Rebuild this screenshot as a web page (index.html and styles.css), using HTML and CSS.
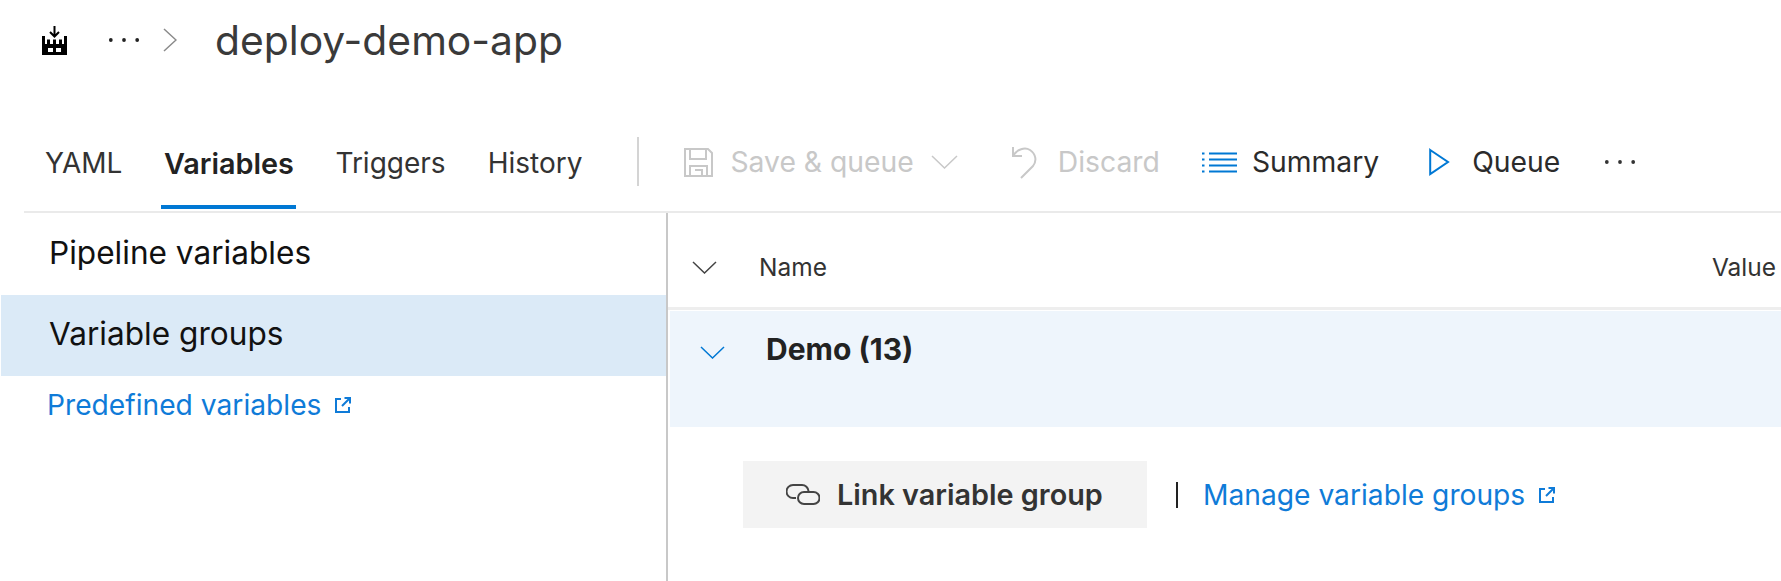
FILE: index.html
```html
<!DOCTYPE html>
<html lang="en">
<head>
<meta charset="utf-8">
<title>deploy-demo-app</title>
<link rel="stylesheet" href="styles.css">
</head>
<body>
<div class="page">
  <header class="crumbs">
    <svg class="i-factory" viewBox="0 0 25 29"><path d="M0 10H3V18H5V13.500H8V18H11V13.500H14V18H17V13.500H20V18H22V10H25V29H0ZM6 22V26H11V22ZM14 22V26H19V22Z" fill="#000" fill-rule="evenodd"/><path d="M12.500 0V10M8 6l4.500 4.500L17 6" fill="none" stroke="#000" stroke-width="2"/></svg>
    <svg class="i-dots" viewBox="0 0 34 6"><circle cx="3" cy="3" r="2" fill="#222"/><circle cx="17" cy="3" r="2" fill="#222"/><circle cx="31" cy="3" r="2" fill="#222"/></svg>
    <svg class="i-crumb" viewBox="0 0 14 24"><path d="M1 1l12 11L1 23" fill="none" stroke="#8a8a8a" stroke-width="1.500"/></svg>
    <h1 class="title">deploy-demo-app</h1>
  </header>

  <nav class="toolbar">
    <div class="tabs">
      <a class="tab tab-yaml">YAML</a>
      <a class="tab tab-active">Variables</a>
      <a class="tab tab-triggers">Triggers</a>
      <a class="tab tab-history">History</a>
    </div>
    <span class="vsep"></span>
    <div class="cmds">
      <svg class="i-save" viewBox="0 0 29 29"><path d="M1 1H24L28 5V28H1ZM6 1V11H22V1M6 28V18H23V28M11 22H18V28" fill="none" stroke="#c8c8c8" stroke-width="2"/></svg>
      <span class="cmd cmd-off cmd-save">Save &amp; queue</span>
      <svg class="i-chev-off" viewBox="0 0 27 14"><path d="M1 1l12.500 12L26 1" fill="none" stroke="#c8c8c8" stroke-width="1.500"/></svg>
      <svg class="i-undo" viewBox="0 0 26 33"><path d="M2 1V10H11M2 10C6 3 14 1 19 4C25 8 26 15 22 20L10 32" fill="none" stroke="#c8c8c8" stroke-width="2"/></svg>
      <span class="cmd cmd-off cmd-discard">Discard</span>
      <svg class="i-summary" viewBox="0 0 35 21"><path d="M7 1.500H35M7 7.500H35M7 13.500H35M7 19.500H35" stroke="#0078d4" stroke-width="2.200"/><path d="M0 1.500H2.500M0 7.500H2.500M0 13.500H2.500M0 19.500H2.500" stroke="#0078d4" stroke-width="2.200"/></svg>
      <span class="cmd cmd-summary">Summary</span>
      <svg class="i-play" viewBox="0 0 21 28"><path d="M1.200 2L19 14L1.200 26Z" fill="none" stroke="#0078d4" stroke-width="2"/></svg>
      <span class="cmd cmd-queue">Queue</span>
      <svg class="i-dots i-more" viewBox="0 0 34 6"><circle cx="3" cy="3" r="2" fill="#333"/><circle cx="17" cy="3" r="2" fill="#333"/><circle cx="31" cy="3" r="2" fill="#333"/></svg>
    </div>
  </nav>

  <main class="body">
    <aside class="side">
      <div class="side-item">Pipeline variables</div>
      <div class="side-item side-selected">Variable groups</div>
      <a class="ext-link side-link">Predefined variables<svg class="i-ext" viewBox="0 0 18 18"><path d="M7 3H2V16H15V11" fill="none" stroke="#0f7bd8" stroke-width="2"/><path d="M8 10L15.500 2.500M10.500 2H16V7.500" fill="none" stroke="#0f7bd8" stroke-width="2"/></svg></a>
    </aside>
    <section class="content">
      <div class="col-head">
        <svg class="i-chev-head" viewBox="0 0 25 13"><path d="M1 1l11.500 11L24 1" fill="none" stroke="#444" stroke-width="1.500"/></svg>
        <span class="col-name">Name</span>
        <span class="col-value">Value</span>
      </div>
      <div class="group">
        <svg class="i-chev-group" viewBox="0 0 25 13"><path d="M1 1l11.500 11L24 1" fill="none" stroke="#0078d4" stroke-width="1.500"/></svg>
        <span class="group-name">Demo (13)</span>
      </div>
      <div class="actions">
        <button class="link-btn">
          <svg class="i-link" viewBox="0 0 34 21"><path d="M10 14H7A6.500 6.500 0 0 1 7 1H16A6.500 6.500 0 0 1 22.500 7" fill="none" stroke="#444" stroke-width="2"/><path d="M18 8H27.500A6 6 0 0 1 27.500 20H18A6 6 0 0 1 18 8Z" fill="none" stroke="#444" stroke-width="2"/></svg>
          Link variable group
        </button>
        <span class="act-sep"></span>
        <a class="ext-link act-link">Manage variable groups<svg class="i-ext" viewBox="0 0 18 18"><path d="M7 3H2V16H15V11" fill="none" stroke="#0f7bd8" stroke-width="2"/><path d="M8 10L15.500 2.500M10.500 2H16V7.500" fill="none" stroke="#0f7bd8" stroke-width="2"/></svg></a>
      </div>
    </section>
  </main>
</div>
</body>
</html>
```

FILE: styles.css
```css
* { box-sizing: border-box; }
html, body { margin: 0; padding: 0; background: #fff; }
.page { width: 1781px; height: 581px; overflow: hidden; font-family: Inter, "Liberation Sans", sans-serif; color: #333; }
svg { display: block; flex: none; }

.crumbs { display: flex; align-items: center; height: 80px; padding-left: 42px; }
.i-factory { width: 25px; height: 29px; }
.i-dots { width: 32px; height: 6px; }
.crumbs .i-dots { margin-left: 41px; }
.i-crumb { width: 14px; height: 24px; margin-left: 23px; }
.title { margin: 0 0 0 38px; font-size: 40.8px; font-weight: 400; line-height: 1; color: #3a3a3a; }

.toolbar { display: flex; align-items: flex-start; height: 133px; margin-left: 24px; border-bottom: 2px solid #eaeaea; }
.tabs { display: flex; height: 129px; }
.tab { display: flex; align-items: center; height: 129px; padding-top: 37px; font-size: 28px; color: #333; }
.tab-yaml { margin-left: 21px; }
.tab-active { margin-left: 39px; width: 135px; padding-top: 41px; justify-content: center; font-size: 28.8px; font-weight: 600; color: #222; border-bottom: 4px solid #0078d4; }
.tab-triggers { margin-left: 39px; }
.tab-history { margin-left: 42px; }
.vsep { width: 2px; height: 49px; margin: 57px 0 0 55px; background: #d4d4d4; }
.cmds { display: flex; align-items: center; height: 129px; padding-top: 35px; margin-left: 45px; }
.cmd { font-size: 28.3px; color: #2b2b2b; white-space: nowrap; }
.cmd-off { color: #c8c8c8; }
.i-save { width: 29px; height: 29px; }
.cmd-save { margin-left: 17px; }
.i-chev-off { width: 27px; height: 14px; margin-left: 17px; }
.i-undo { width: 26px; height: 33px; margin-left: 53px; }
.cmd-discard { margin-left: 21px; }
.i-summary { width: 35px; height: 21px; margin-left: 42px; }
.cmd-summary { margin-left: 15px; }
.i-play { width: 21px; height: 28px; margin-left: 50px; }
.cmd-queue { margin-left: 22px; }
.i-more { margin-left: 44px; }

.body { display: flex; height: 368px; }
.side { width: 668px; flex: none; border-right: 2px solid #c8c8c8; }
.side-item { display: flex; align-items: center; height: 81px; padding-left: 49px; font-size: 31.6px; color: #111; }
.side-item:first-child { height: 82px; padding-bottom: 4px; }
.side-selected { margin-left: 1px; padding: 0 0 4px 48px; background: #dbeaf7; }
.ext-link { display: inline-flex; align-items: center; color: #0f7bd8; font-size: 28.2px; }
.i-ext { width: 18px; height: 18px; margin-left: 13px; }
.side-link { margin: 12px 0 0 47px; }

.content { flex: 1; min-width: 0; }
.col-head { display: flex; align-items: center; height: 97px; border-bottom: 3px solid #eee; padding: 14px 5px 0 24px; font-size: 24.5px; color: #333; }
.i-chev-head { width: 25px; height: 13px; }
.col-name { margin-left: 42px; }
.col-value { margin-left: auto; }
.group { display: flex; align-items: flex-start; height: 116px; margin: 1px 0 0 2px; padding: 20px 0 0 30px; background: #eef5fc; }
.i-chev-group { width: 25px; height: 13px; margin-top: 15px; }
.group-name { margin-left: 41px; font-size: 30px; font-weight: 700; color: #222; }
.actions { display: flex; align-items: center; margin: 34px 0 0 75px; }
.link-btn { display: flex; align-items: center; width: 404px; height: 67px; padding: 0 0 0 43px; border: 0; background: #f3f3f3; font: 600 28.8px Inter, "Liberation Sans", sans-serif; color: #333; }
.i-link { width: 34px; height: 21px; margin-right: 17px; }
.act-sep { width: 2px; height: 26px; margin-left: 29px; background: #222; }
.act-link { margin-left: 25px; }
```
